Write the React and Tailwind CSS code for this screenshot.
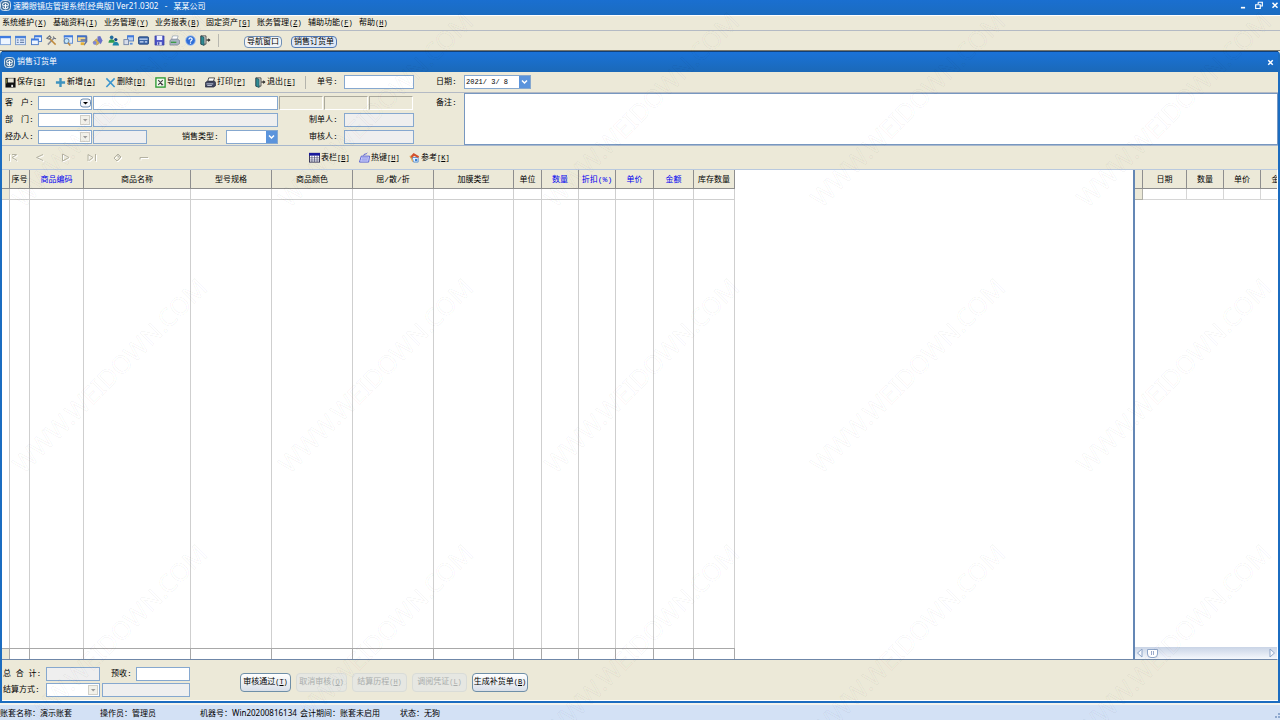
import React from 'react';

const LogoIcon = () => (
  <svg className="w-[11px] h-[11px] shrink-0" viewBox="0 0 12 12">
    <rect x="0.5" y="0.5" width="11" height="11" rx="3.5" fill="#3f6f9c" stroke="#e6eef5" strokeWidth="1" />
    <path d="M2.500 5.200C3.500 2 8.500 2 9.500 5.200M2.500 6.200h7M3 7.500C4 10.500 8 10.500 9 7.500M6 4v5" fill="none" stroke="#fff" strokeWidth="1.200" />
  </svg>
);

const Svg = ({ children, className = 'w-[11px] h-[11px]' }) => (
  <svg className={`${className} shrink-0`} viewBox="0 0 12 12">{children}</svg>
);

const icons = {
  window: (
    <Svg>
      <rect x="0.500" y="1.500" width="11" height="9" fill="#eef5ff" stroke="#7fa3dc" />
      <path d="M0 1h12v2.500H0z" fill="#3f7be0" />
    </Svg>
  ),
  form: (
    <Svg>
      <rect x="0.500" y="1.500" width="11" height="9" fill="#dfeafc" stroke="#7d9cc9" />
      <path d="M0 1h12v2.500H0z" fill="#4b82d9" />
      <path d="M2 5.500h2M2 8h2M5.500 5.500h4.500M5.500 8h4.500" stroke="#47648f" />
    </Svg>
  ),
  cascade: (
    <Svg>
      <rect x="4" y="1" width="7.500" height="6" fill="#eef5ff" stroke="#4b7ac7" />
      <path d="M3.500 .5h8.500v2H3.500z" fill="#3f7be0" />
      <rect x="0.500" y="4.500" width="7.500" height="6" fill="#eef5ff" stroke="#4b7ac7" />
      <path d="M0 4h8.500v2H0z" fill="#3f7be0" />
    </Svg>
  ),
  tools: (
    <Svg>
      <path d="M2 10.500L9 3" stroke="#8b8f99" strokeWidth="1.600" />
      <path d="M3.500 3.500l7 7" stroke="#c08a3c" strokeWidth="1.600" />
      <path d="M1 3.500l3-2.500 1.500 2-2 1.500zM8 1.500l1 2 2 .5" fill="none" stroke="#6d737d" strokeWidth="1.200" />
    </Svg>
  ),
  search: (
    <Svg>
      <rect x="2.500" y="1" width="9" height="8" fill="#dceafc" stroke="#5d8bd0" />
      <path d="M2 .5h10v2H2z" fill="#3f7be0" />
      <circle cx="5" cy="6.500" r="2.700" fill="#c7e8fb" stroke="#54779e" />
      <path d="M6.500 8.500l2.500 3" stroke="#c08a3c" strokeWidth="1.700" />
    </Svg>
  ),
  query: (
    <Svg>
      <rect x="0.500" y="1" width="9" height="6" fill="#f6d98b" stroke="#6385c4" />
      <path d="M0 .5h11v2H0z" fill="#3f6fc8" />
      <path d="M4 5.500h7M10.500 2v5l-3 4" stroke="#5b6fa0" fill="none" strokeWidth="1.500" />
      <path d="M4 8h4v3H4z" fill="#e3b13a" />
    </Svg>
  ),
  bell: (
    <Svg>
      <path d="M1 8l4-4 3 5-3 2z" fill="#d8b44c" stroke="#9b8250" strokeWidth=".6" />
      <path d="M6 1.500l3-.5 2.500 5-2 4-3.500-4z" fill="#6a72c9" />
      <circle cx="3" cy="8.500" r="2" fill="#7c86d8" />
    </Svg>
  ),
  users: (
    <Svg>
      <circle cx="4" cy="2.500" r="2" fill="#246f9e" />
      <path d="M.5 8.500c0-5 7-5 7 0z" fill="#2f9e50" />
      <circle cx="8.500" cy="5" r="1.800" fill="#174a89" />
      <path d="M5 11.500c0-5.500 7-5.500 7 0z" fill="#1e86a8" />
    </Svg>
  ),
  network: (
    <Svg>
      <rect x="5" y="1" width="6.500" height="5.500" fill="#b8d0f5" stroke="#4e79bd" />
      <path d="M4.500 .5H12v2H4.500z" fill="#3f7be0" />
      <rect x="1" y="5" width="5" height="5.500" fill="#d8dde8" stroke="#7486a8" />
      <path d="M7.500 8.500h3v2h-3z" fill="#5f92d8" />
    </Svg>
  ),
  card: (
    <Svg>
      <rect x="0.500" y="2" width="11" height="8" rx="1" fill="#3c66a8" stroke="#274a80" />
      <path d="M1.500 4.500h9M2 7.500h4M7.500 7.500h2.500" stroke="#cfe0f7" strokeWidth="1.200" />
    </Svg>
  ),
  disk: (
    <Svg>
      <path d="M1 1h10v10H1z" fill="#4b52c4" stroke="#30379b" strokeWidth=".6" />
      <path d="M3 1h6v4.500H3z" fill="#eef1ff" />
      <path d="M3.500 7.500h5V11h-5z" fill="#d4d8f5" />
      <path d="M4.500 8h1.300v2.500H4.500z" fill="#30379b" />
    </Svg>
  ),
  printColor: (
    <Svg>
      <path d="M4 1h6L8.500 5.500h-6z" fill="#fff" stroke="#8c9aab" strokeWidth=".7" />
      <path d="M1 6l2-1.500h6.500L11.500 6v3.500L9 11H1z" fill="#a9b5c4" stroke="#6f7b8b" strokeWidth=".7" />
      <path d="M2 8h6" stroke="#3d9c47" strokeWidth="1.500" />
    </Svg>
  ),
  help: (
    <Svg>
      <circle cx="6" cy="6" r="5.300" fill="#2f6fd8" stroke="#a9c6f2" strokeWidth="1" />
      <path d="M4.200 4.800C4.200 2.600 7.800 2.600 7.800 4.700 7.800 6 6 6 6 7.300M6 8.300v1.200" fill="none" stroke="#fff" strokeWidth="1.300" />
    </Svg>
  ),
  exit: (
    <Svg>
      <path d="M1 1h5.500v9H1z" fill="#f4f4ee" stroke="#444" />
      <path d="M1 1l3.500 1.500v9L1 10z" fill="#2e8c94" stroke="#1c3f4a" strokeWidth=".7" />
      <path d="M7 5.500h2.500" stroke="#222" strokeWidth="1.300" />
      <path d="M9 3.500l2.500 2L9 7.500z" fill="#222" />
    </Svg>
  ),
  save: (
    <Svg>
      <path d="M.5 1h11v10.500H.5z" fill="#111" />
      <path d="M3 1.500h6.500v4.500H3z" fill="#e7e4d5" />
      <path d="M1.500 2v5" stroke="#8a8a3a" />
      <path d="M6.800 8.500h2v2.500h-2z" fill="#eee" />
    </Svg>
  ),
  add: (
    <Svg><path d="M6 1v10M1 6h10" stroke="#3e93bf" strokeWidth="2.600" /></Svg>
  ),
  remove: (
    <Svg><path d="M1.500 1.500l9 9.500M10.500 1.500L1.500 11" stroke="#3d97cf" strokeWidth="1.700" /></Svg>
  ),
  excel: (
    <Svg>
      <rect x="1" y="1" width="10" height="10" fill="#f4fbf2" stroke="#2f9a35" strokeWidth="1.500" />
      <path d="M3.500 3.500l5 5M8.500 3.500l-5 5M6.500 8.500h2.500" stroke="#444" strokeWidth="1.200" />
    </Svg>
  ),
  print: (
    <Svg>
      <path d="M4 1h6.500L9 5H3z" fill="#fff" stroke="#222" strokeWidth=".8" />
      <path d="M.5 6L2.500 4.500h8L11.500 6v3.500L9.500 11H.5z" fill="#3c4460" stroke="#1d2233" strokeWidth=".7" />
      <path d="M1.500 7.500h7.500M2.500 9.300h5" stroke="#d9e0f0" strokeWidth=".9" />
    </Svg>
  ),
  table: (
    <Svg>
      <rect x="0.500" y="1.500" width="11" height="9.500" fill="#fff" stroke="#2c2c50" />
      <path d="M0 1h12v3H0z" fill="#1a1a9c" />
      <path d="M3.200 4v7M6 4v7M8.800 4v7M.5 6.300h11M.5 8.700h11" stroke="#44446e" strokeWidth=".7" />
    </Svg>
  ),
  keyboard: (
    <Svg>
      <path d="M2.500 4.500h9L10.500 11H.5z" fill="#dfe3ff" stroke="#5058d0" />
      <path d="M3 6.500h7M2.500 8.700h7" stroke="#6a70dc" />
      <path d="M5 4c0-2.500 3-1 4-3" fill="none" stroke="#5058d0" />
    </Svg>
  ),
  refer: (
    <Svg>
      <path d="M3.500 6h6.500v5H5z" fill="#eef6ff" stroke="#5a8fce" />
      <path d="M1 5.500L5 1l6 3.500-1 2L5.500 4 3 7z" fill="#d3502c" />
      <path d="M1 4l2 4 1 2.500" fill="none" stroke="#e0a24c" strokeWidth="1.200" />
      <path d="M6.500 7.500H9V10H6.500z" fill="#3b80d0" />
    </Svg>
  ),
};

const Key = ({ open, close, k }) => (
  <span className="text-[7px]">{open}<u>{k}</u>{close}</span>
);

const menus = [
  ['系统维护', 'X'], ['基础资料', 'I'], ['业务管理', 'Y'], ['业务报表', 'B'],
  ['固定资产', 'G', true], ['账务管理', 'Z'], ['辅助功能', 'F'], ['帮助', 'H'],
];

const quickTools = [
  ['window', '导航'], ['form', '表单'], ['cascade', '层叠'], ['tools', '设置'], ['search', '查找'],
  ['query', '查询'], ['bell', '提醒'], ['users', '用户'], ['network', '网络'], ['card', '卡片'],
  ['disk', '备份'], ['printColor', '打印'], ['help', '帮助'], ['exit', '退出'],
];

const actions = [
  ['save', '保存', 'S'], ['add', '新增', 'A'], ['remove', '删除', 'D'],
  ['excel', '导出', 'O'], ['print', '打印', 'P'], ['exit', '退出', 'E'],
];

const gridActions = [['table', '表栏', 'B'], ['keyboard', '热键', 'H'], ['refer', '参考', 'K']];

const navigation = [
  ['首条', 'M1.500 2v7M9 2.500L4 5.500 9 8.500M4 2.500h4'],
  ['上一条', 'M9 2.500L2.500 5.500 9 8.500'],
  ['下一条', 'M2.500 2v7L9 5.500z'],
  ['末条', 'M9.500 2v7M2 9V2.500L7 5.500 3 8.500'],
  ['插入', 'M2 6l4-4 3 3-4 4zM6 2v3h3'],
  ['移除', 'M2 5.500h8M2 5.500v2'],
];

const columns = [
  { title: '序号', width: 20 },
  { title: '商品编码', width: 54, blue: true },
  { title: '商品名称', width: 107 },
  { title: '型号规格', width: 81 },
  { title: '商品颜色', width: 81 },
  { title: '屈/散/折', width: 81 },
  { title: '加膜类型', width: 80 },
  { title: '单位', width: 28 },
  { title: '数量', width: 37, blue: true },
  { title: '折扣(%)', width: 37, blue: true },
  { title: '单价', width: 38, blue: true },
  { title: '金额', width: 40, blue: true },
  { title: '库存数量', width: 41 },
];

const priceColumns = [
  { title: '日期', width: 44 },
  { title: '数量', width: 37 },
  { title: '单价', width: 37 },
  { title: '金额', width: 38 },
];

const footerButtons = [
  { title: '审核通过', k: 'T', width: 'w-[51px]' },
  { title: '取消审核', k: 'Q', width: 'w-[51px]', disabled: true },
  { title: '结算历程', k: 'H', width: 'w-[55px]', disabled: true },
  { title: '调阅凭证', k: 'L', width: 'w-[55px]', disabled: true },
  { title: '生成补货单', k: 'B', width: 'w-[56px]' },
];

const Field = ({ label, className = '', readOnly, ...props }) => (
  <input
    aria-label={label}
    readOnly={readOnly}
    className={`h-[14px] min-w-0 border border-[#86a8cf] px-px outline-none ${readOnly ? 'bg-[#efefef]' : 'bg-white'} ${className}`}
    {...props}
  />
);

const Arrow = ({ kind }) => {
  if (kind === 'blue') {
    return (
      <svg className="w-[11px] h-[12px]" viewBox="0 0 11 12">
        <rect width="11" height="12" fill="#5b94dc" />
        <path d="M3 4.500L5.500 7 8 4.500" fill="none" stroke="#fff" strokeWidth="1.500" />
      </svg>
    );
  }
  if (kind === 'combo') {
    return (
      <svg className="w-[11px] h-[12px]" viewBox="0 0 11 12">
        <rect x="0.500" y="2" width="10" height="8" rx="2.500" fill="#f4f7fb" stroke="#6e8cad" />
        <path d="M3 5h5L5.500 7.500z" fill="#000" />
      </svg>
    );
  }
  return (
    <svg className="w-[11px] h-[12px]" viewBox="0 0 11 12">
      <rect x="0.500" y="1.500" width="9" height="9" fill="#f2f1ea" stroke="#d0cfc8" />
      <path d="M3 5h4.500L5.200 7.500z" fill="#9a9a9a" />
    </svg>
  );
};

const Select = ({ id, label, kind = 'disabled', className }) => (
  <span className={`relative flex h-[14px] border border-[#86a8cf] bg-white ${className}`}>
    <select id={id} aria-label={label} disabled={kind === 'disabled'} className="w-full appearance-none bg-white outline-none">
      <option></option>
    </select>
    <span className="pointer-events-none absolute right-0 top-0"><Arrow kind={kind} /></span>
  </span>
);

const Cols = ({ items }) => (
  <colgroup>
    <col style={{ width: 8 }} />
    {items.map((c) => <col key={c.title} style={{ width: c.width }} />)}
  </colgroup>
);

const HeadRow = ({ items }) => (
  <tr className="h-[19px] bg-[#ece9d8]">
    <td className="border-r border-b border-[#8e8e8e]"></td>
    {items.map((c) => (
      <th key={c.title} className={`whitespace-nowrap border-r border-b border-[#8e8e8e] p-0 pt-0.5 font-normal ${c.blue ? 'text-[#0000f0]' : ''}`}>
        {c.title}
      </th>
    ))}
  </tr>
);

const OrderGrid = () => (
  <table className="h-full w-[733px] table-fixed border-separate border-spacing-0">
    <Cols items={columns} />
    <thead><HeadRow items={columns} /></thead>
    <tbody>
      <tr className="h-[11px]">
        <td className="border-r border-b border-[#c6c6c6] bg-[#ece9d8] p-0"></td>
        {columns.map((c) => <td key={c.title} className="border-r border-b border-[#cfcfcf] p-0"></td>)}
      </tr>
      <tr>
        <td className="border-r border-[#c6c6c6] p-0"></td>
        {columns.map((c) => <td key={c.title} className="border-r border-[#cfcfcf] p-0"></td>)}
      </tr>
    </tbody>
    <tfoot>
      <tr className="h-[11px]">
        <td className="border-t border-r border-[#a8a8a8] bg-[#ece9d8] p-0"></td>
        {columns.map((c) => <td key={c.title} className="border-t border-r border-[#a8a8a8] p-0"></td>)}
      </tr>
    </tfoot>
  </table>
);

const PriceGrid = () => (
  <div className="flex w-[144px] shrink-0 flex-col overflow-hidden border-l-2 border-[#6487b5] bg-white">
    <div className="flex-1 overflow-hidden">
      <table className="w-[164px] table-fixed border-separate border-spacing-0">
        <Cols items={priceColumns} />
        <thead><HeadRow items={priceColumns} /></thead>
        <tbody>
          <tr className="h-[11px]">
            <td className="border-r border-b border-[#b0b0a8] bg-[#ece9d8] p-0"></td>
            {priceColumns.map((c) => <td key={c.title} className="border-r border-b border-[#d6d6d6] p-0"></td>)}
          </tr>
        </tbody>
      </table>
    </div>
    <div className="flex h-[12px] items-center bg-linear-to-b from-[#c9d4e6] to-[#f5f8fc] px-px">
      <button aria-label="向左" className="flex"><svg className="w-[8px] h-[10px]" viewBox="0 0 8 10"><path d="M6 1v8L1.500 5z" fill="#f5f8fd" stroke="#8ea5c8" /></svg></button>
      <span className="ml-[3px] flex h-[9px] w-[11px] items-center justify-center gap-px rounded-b-sm border border-[#8ea5c8] bg-white">
        <span className="h-[4px] w-px bg-[#9caccb]"></span>
        <span className="h-[4px] w-px bg-[#9caccb]"></span>
      </span>
      <button aria-label="向右" className="ml-auto flex"><svg className="w-[8px] h-[10px]" viewBox="0 0 8 10"><path d="M2 1v8L6.500 5z" fill="#f5f8fd" stroke="#8ea5c8" /></svg></button>
    </div>
  </div>
);

const TitleBar = () => (
  <header className="flex h-[15px] items-start bg-linear-to-b from-[#1a6fd0] to-[#1b6cc0] text-[8px] text-white">
    <LogoIcon />
    <h1 className="ml-0.5 whitespace-nowrap font-['Noto_Sans','Noto_Sans_CJK_SC',sans-serif] leading-[11px]">速腾眼镜店管理系统[经典版] Ver21.0302&nbsp;&nbsp; -&nbsp;&nbsp; 某某公司</h1>
    <div className="ml-auto flex gap-[6px] pt-px">
      <button aria-label="最小化" className="flex"><Svg className="w-[10px] h-[10px]"><path d="M3.500 8h5" stroke="#fff" strokeWidth="2" /></Svg></button>
      <button aria-label="还原" className="flex"><Svg className="w-[10px] h-[10px]"><path d="M5 1.500h5v4.500H8M5 1.500v2M2 4.500h5.500V9H2z" fill="none" stroke="#fff" strokeWidth="1.400" /></Svg></button>
      <button aria-label="关闭" className="flex"><Svg className="w-[10px] h-[10px]"><path d="M3 2l6 6M9 2L3 8" stroke="#fff" strokeWidth="1.800" /></Svg></button>
    </div>
  </header>
);

const Watermark = () => (
  <svg className="pointer-events-none absolute inset-0 h-full w-full" aria-hidden="true">
    {[109, 375, 641].map((y) => [109, 375, 641, 907, 1173].map((x) => (
      <text
        key={`${x}-${y}`}
        x={x}
        y={y}
        transform={`rotate(-45 ${x} ${y})`}
        textAnchor="middle"
        dominantBaseline="central"
        className="fill-none stroke-black/4 font-['Noto_Sans',sans-serif] text-[25px]"
      >
        WWW.WEIDOWN.COM
      </text>
    )))}
  </svg>
);

const App = () => {
  return (
    <div className="relative flex h-screen flex-col overflow-hidden bg-[#ece9d8] font-['Liberation_Mono','Noto_Sans_CJK_SC',monospace] text-[8px] leading-[14px] text-black">
      <TitleBar />

      {/* 主菜单 */}
      <nav className="flex h-[16px] items-center border-t border-b border-t-white border-b-[#b4bac4] pl-0.5">
        {menus.map(([title, k, square]) => (
          <button key={title} className="w-[51px] whitespace-nowrap text-left">
            {title}<Key open={square ? '[' : '('} k={k} close={square ? ']' : ')'} />
          </button>
        ))}
      </nav>

      {/* 快捷工具栏 */}
      <div className="flex h-[20px] items-center border-b border-[#77756a]">
        <div className="flex w-[211px] justify-between">
          {quickTools.map(([icon, title]) => (
            <button key={icon} title={title} aria-label={title}>{icons[icon]}</button>
          ))}
        </div>
        <div className="ml-[7px] mr-[25px] h-[13px] border-l border-[#b8b8b0]"></div>
        <div className="flex gap-[9px] pt-0.5">
          <button className="h-[12px] w-[38px] whitespace-nowrap rounded-sm border border-[#6f8fb5] bg-[#f2f4f6] leading-[10px]">导航窗口</button>
          <button className="h-[12px] w-[46px] whitespace-nowrap rounded-sm border border-[#5279b4] bg-[#dfe8f5] leading-[10px]">销售订货单</button>
        </div>
      </div>

      {/* 销售订货单窗口 */}
      <main className="flex min-h-0 flex-1 flex-col rounded-t-sm border-x-2 border-b-2 border-[#1b6cc0] bg-[#ece9d8]">
        <div className="flex h-[21px] shrink-0 items-center border-t border-[#123f75] bg-linear-to-b from-[#1a72d8] to-[#1b69b8] pl-0.5 text-white">
          <LogoIcon />
          <h2 className="ml-0.5">销售订货单</h2>
          <button aria-label="关闭窗口" className="ml-auto mr-[3px] flex"><Svg className="w-[9px] h-[9px]"><path d="M3 3l6 6M9 3L3 9" stroke="#fff" strokeWidth="2" /></Svg></button>
        </div>

        <div className="flex h-[21px] shrink-0 items-center border-b border-[#b4bac4] pl-[3px]">
          {actions.map(([icon, title, k]) => (
            <button key={icon} className="flex w-[50px] items-center gap-px whitespace-nowrap">
              {icons[icon]}<span>{title}<Key open="[" k={k} close="]" /></span>
            </button>
          ))}
          <div className="h-[13px] w-[12px] border-l border-[#b4b4ac]"></div>
          <label htmlFor="orderNo" className="w-[27px]">单号:</label>
          <Field id="orderNo" className="w-[70px]" />
          <label htmlFor="orderDate" className="ml-[22px] w-[28px]">日期:</label>
          <span className="flex h-[14px] w-[67px] border border-[#86a8cf] bg-white">
            <input id="orderDate" defaultValue="2021/ 3/ 8" className="w-0 flex-1 pl-px text-[7px] outline-none" />
            <button aria-label="选择日期" className="flex"><Arrow kind="blue" /></button>
          </span>
        </div>

        {/* 单据信息 */}
        <div className="flex h-[53px] shrink-0 border-b border-[#a9b8cc]">
          <div className="flex w-[434px] shrink-0 flex-col gap-[3px] pt-[3px] pl-[3px]">
            <div className="flex gap-px">
              <label htmlFor="customer" className="w-[32px]">客　户:</label>
              <Select id="customer" kind="combo" className="w-[54px]" />
              <Field label="客户名称" className="w-[185px]" />
              <div className="flex gap-px">
                {['等级', '折扣', '余额'].map((name) => (
                  <output key={name} aria-label={name} className="h-[14px] w-[44px] border border-t-[#aaa99d] border-l-[#aaa99d] border-r-white border-b-white"></output>
                ))}
              </div>
            </div>
            <div className="flex gap-px">
              <label htmlFor="dept" className="w-[32px]">部　门:</label>
              <Select id="dept" className="w-[54px]" />
              <Field label="部门名称" readOnly className="w-[185px]" />
              <label htmlFor="maker" className="ml-[30px] w-[34px]">制单人:</label>
              <Field id="maker" readOnly className="w-[70px]" />
            </div>
            <div className="flex gap-px">
              <label htmlFor="handler" className="w-[32px]">经办人:</label>
              <Select id="handler" className="w-[54px]" />
              <Field label="经办人姓名" readOnly className="w-[54px]" />
              <label htmlFor="saleType" className="ml-[34px] w-[43px]">销售类型:</label>
              <Select id="saleType" kind="blue" className="w-[52px]" />
              <label htmlFor="auditor" className="ml-[30px] w-[34px]">审核人:</label>
              <Field id="auditor" readOnly className="w-[70px]" />
            </div>
          </div>
          <label htmlFor="remark" className="w-[28px] shrink-0 pt-[3px]">备注:</label>
          <textarea id="remark" className="min-w-0 flex-1 resize-none border border-[#7797c0] bg-white outline-none"></textarea>
        </div>

        <div className="flex h-[23px] shrink-0 items-center pl-1.5">
          <div className="flex w-[301px]">
            {navigation.map(([title, d]) => (
              <button key={title} aria-label={title} disabled className="flex w-[26px]">
                <svg className="w-[11px] h-[11px]" viewBox="0 0 11 11">
                  <path d={d} transform="translate(1 1)" fill="none" stroke="#fff" />
                  <path d={d} fill="none" stroke="#b4b2a2" />
                </svg>
              </button>
            ))}
          </div>
          {gridActions.map(([icon, title, k]) => (
            <button key={icon} className="flex w-[50px] items-center gap-px whitespace-nowrap">
              {icons[icon]}<span>{title}<Key open="[" k={k} close="]" /></span>
            </button>
          ))}
        </div>

        {/* 明细表 */}
        <div className="flex min-h-0 flex-1 border-t border-b border-r border-t-[#b9c9de] border-r-white border-b-[#6f87a8]">
          <div className="min-w-0 flex-1 overflow-hidden bg-white"><OrderGrid /></div>
          <PriceGrid />
        </div>

        <div className="flex h-[41px] shrink-0 items-center border-b border-white pt-1 pl-px">
          <div className="flex w-[237px] flex-col gap-0.5">
            <div className="flex items-center gap-0.5">
              <label htmlFor="total" className="w-[41px] whitespace-nowrap">总 合 计:</label>
              <Field id="total" readOnly className="w-[54px]" />
              <label htmlFor="prepaid" className="ml-[9px] w-[23px]">预收:</label>
              <Field id="prepaid" className="w-[54px]" />
            </div>
            <div className="flex items-center gap-0.5">
              <label htmlFor="payment" className="w-[41px]">结算方式:</label>
              <Select id="payment" className="w-[54px]" />
              <Field label="结算账户" readOnly className="w-[88px]" />
            </div>
          </div>
          <div className="flex gap-[5px]">
            {footerButtons.map((b) => (
              <button
                key={b.title}
                disabled={b.disabled}
                className={`h-[19px] whitespace-nowrap rounded border ${b.width} ${b.disabled ? 'border-[#d9dcd8] bg-[#e6e7e2] text-[#a9adac]' : 'border-[#6f8fa8] bg-linear-to-b from-white to-[#d9dfe8]'}`}
              >
                {b.title}<Key open="(" k={b.k} close=")" />
              </button>
            ))}
          </div>
        </div>
      </main>

      {/* 状态栏 */}
      <footer className="flex h-[17px] shrink-0 items-center border-t-2 border-[#f3f3ee] bg-[#d3e1f5] font-['Noto_Sans','Noto_Sans_CJK_SC',sans-serif] whitespace-nowrap">
        <span className="w-[100px]">账套名称：演示账套</span>
        <span className="w-[100px]">操作员：管理员</span>
        <span className="w-[100px]">机器号：Win20200816134</span>
        <span className="w-[100px]">会计期间：账套未启用</span>
        <span>状态：无狗</span>
        <svg className="ml-auto mt-auto w-[7px] h-[7px]" viewBox="0 0 7 7">
          <path d="M5 0h2v2H5zM5 3h2v2H5zM2 3h2v2H2z" fill="#8fa9cf" />
        </svg>
      </footer>

      <Watermark />
    </div>
  );
};

export default App;
